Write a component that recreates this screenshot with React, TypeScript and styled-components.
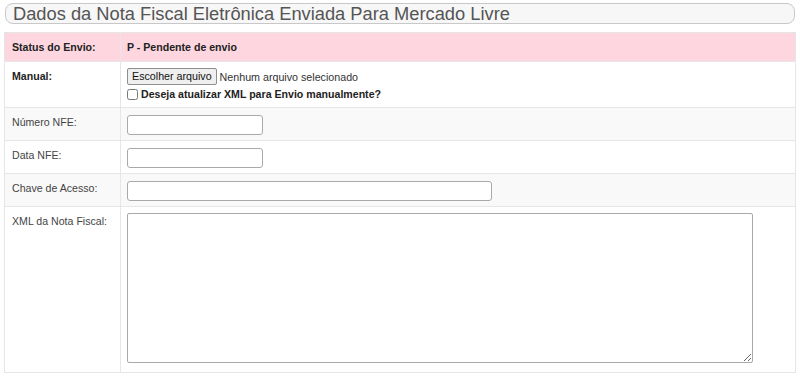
import React from 'react';
import styled, { createGlobalStyle } from 'styled-components';

const GlobalStyle = createGlobalStyle`
  body {
    margin: 0;
    background: #fff;
    font-family: Arial, "Liberation Sans", sans-serif;
    color: #333;
  }
`;

const Page = styled.div`
  padding: 3px 4px 4px;
`;

const TitleBox = styled.div`
  margin: 0 1px 8px;
  height: 19px;
  border: 1px solid #c8c8c8;
  border-radius: 8px;
  background: #f7f7f7;
  font-size: 18.3px;
  line-height: 20px;
  color: #555;
  padding: 0 7px;
  white-space: nowrap;
`;

const Table = styled.table`
  width: 100%;
  border-collapse: collapse;
  font-size: 10.6px;
`;

const Row = styled.tr<{ $tone?: 'status' | 'shade' | 'plain' }>`
  background: ${(p) =>
    p.$tone === 'status' ? '#fdd6df' : p.$tone === 'shade' ? '#f9f9f9' : '#fff'};
`;

const Label = styled.td<{ $bold?: boolean; $h: number }>`
  box-sizing: border-box;
  height: ${(p) => p.$h}px;
  width: 116px;
  border: 1px solid #e6e6e6;
  padding: 7px 7px 0;
  vertical-align: top;
  font-weight: ${(p) => (p.$bold ? 'bold' : 'normal')};
  color: ${(p) => (p.$bold ? '#222' : '#444')};
  line-height: 14px;
`;

const Value = styled.td<{ $bold?: boolean }>`
  border: 1px solid #e6e6e6;
  padding: 6px 6px 0;
  vertical-align: top;
  font-weight: ${(p) => (p.$bold ? 'bold' : 'normal')};
  color: #222;
  line-height: 14px;
`;

const StatusText = styled.span`
  display: inline-block;
  padding-top: 1px;
`;

const FileLine = styled.div`
  display: flex;
  align-items: center;
  gap: 3px;
  font-size: 10.7px;
  color: #333;
`;

const FileButton = styled.button`
  font-family: Arial, "Liberation Sans", sans-serif;
  font-size: 10.7px;
  height: 17px;
  padding: 0 4px;
  border: 1px solid #8f8f8f;
  border-radius: 2px;
  background: #efefef;
  color: #111;
  line-height: 15px;
`;

const CheckLine = styled.label`
  display: flex;
  align-items: center;
  margin-top: 2px;
  font-weight: bold;
  color: #222;

  input {
    margin: 0 3px 0 0;
    width: 11px;
    height: 11px;
  }
`;

const TextInput = styled.input<{ $w: number }>`
  display: block;
  box-sizing: border-box;
  width: ${(p) => p.$w}px;
  height: 20px;
  margin: 1px 0 0;
  border: 1px solid #a9a9a9;
  border-radius: 3px;
  background: #fff;
`;

const TextArea = styled.textarea`
  display: block;
  box-sizing: border-box;
  width: 626px;
  height: 150px;
  margin: 0;
  border: 1px solid #a9a9a9;
  border-radius: 2px;
  resize: both;
`;

export default function App() {
  return (
    <Page>
      <GlobalStyle />
      <TitleBox>Dados da Nota Fiscal Eletrônica Enviada Para Mercado Livre</TitleBox>
      <Table>
        <tbody>
          <Row $tone="status">
            <Label $bold $h={29}>Status do Envio:</Label>
            <Value $bold>
              <StatusText>P - Pendente de envio</StatusText>
            </Value>
          </Row>
          <Row $tone="plain">
            <Label $bold $h={46}>Manual:</Label>
            <Value>
              <FileLine>
                <FileButton type="button">Escolher arquivo</FileButton>
                <span>Nenhum arquivo selecionado</span>
              </FileLine>
              <CheckLine>
                <input type="checkbox" />
                Deseja atualizar XML para Envio manualmente?
              </CheckLine>
            </Value>
          </Row>
          <Row $tone="shade">
            <Label $h={33}>Número NFE:</Label>
            <Value>
              <TextInput $w={136} />
            </Value>
          </Row>
          <Row $tone="plain">
            <Label $h={33}>Data NFE:</Label>
            <Value>
              <TextInput $w={136} />
            </Value>
          </Row>
          <Row $tone="shade">
            <Label $h={33}>Chave de Acesso:</Label>
            <Value>
              <TextInput $w={365} />
            </Value>
          </Row>
          <Row $tone="plain">
            <Label $h={166}>XML da Nota Fiscal:</Label>
            <Value>
              <TextArea />
            </Value>
          </Row>
        </tbody>
      </Table>
    </Page>
  );
}
